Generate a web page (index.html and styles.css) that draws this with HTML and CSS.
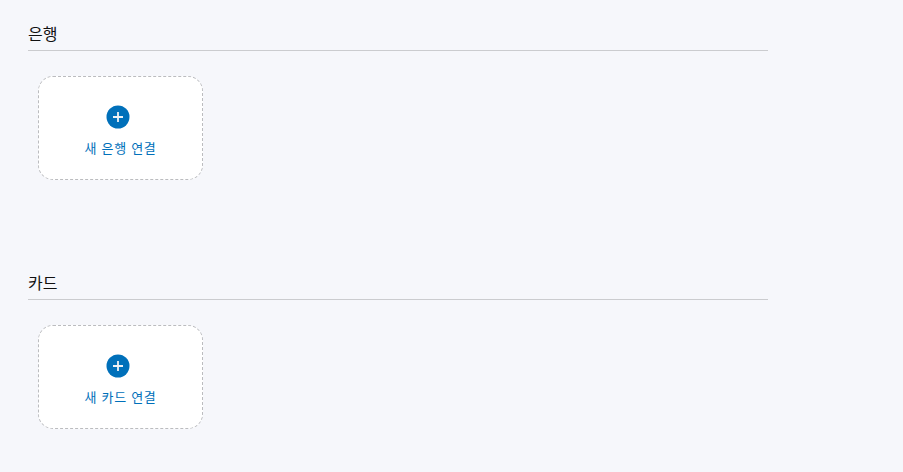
FILE: index.html
```html
<!DOCTYPE html>
<html lang="ko">
<head>
    <meta charset="UTF-8">
    <meta name="viewport" content="width=device-width, initial-scale=1.0">
    <title>연결</title>
    <link rel="stylesheet" href="styles.css">
</head>
<body>
    <section class="group">
        <h2 class="group-title">은행</h2>
        <a class="add-card" href="#">
            <svg class="add-icon" viewBox="0 0 24 24" width="24" height="24">
                <circle cx="12" cy="12" r="11.5" fill="#0070ba"/>
                <path d="M12 7v10M7 12h10" stroke="#eef2f6" stroke-width="1.8"/>
            </svg>
            <span class="add-label">새 은행 연결</span>
        </a>
    </section>
    <section class="group">
        <h2 class="group-title">카드</h2>
        <a class="add-card" href="#">
            <svg class="add-icon" viewBox="0 0 24 24" width="24" height="24">
                <circle cx="12" cy="12" r="11.5" fill="#0070ba"/>
                <path d="M12 7v10M7 12h10" stroke="#eef2f6" stroke-width="1.8"/>
            </svg>
            <span class="add-label">새 카드 연결</span>
        </a>
    </section>
</body>
</html>
```

FILE: styles.css
```css
* {
    margin: 0;
    padding: 0;
    box-sizing: border-box;
}

body {
    background-color: #f6f7fb;
    font-family: "Noto Sans CJK KR", "Liberation Sans", sans-serif;
    padding: 24px 0 0 28px;
}

.group {
    width: 740px;
    margin-bottom: 93px;
}

.group:last-child {
    margin-bottom: 0;
}

.group-title {
    height: 27px;
    border-bottom: 1px solid #cbcccf;
    font-size: 16px;
    font-weight: 400;
    line-height: 19px;
    color: #111;
}

.add-card {
    display: flex;
    flex-direction: column;
    align-items: center;
    width: 165px;
    height: 104px;
    margin: 25px 0 0 10px;
    padding-top: 28px;
    background-color: #fff;
    border: 1px dashed #bbbcbf;
    border-radius: 15px;
    text-decoration: none;
}

.add-icon {
    display: block;
    margin-right: 5px;
}

.add-label {
    margin-top: 10px;
    font-size: 13px;
    letter-spacing: 0.7px;
    line-height: 18px;
    color: #0070ba;
}
```
